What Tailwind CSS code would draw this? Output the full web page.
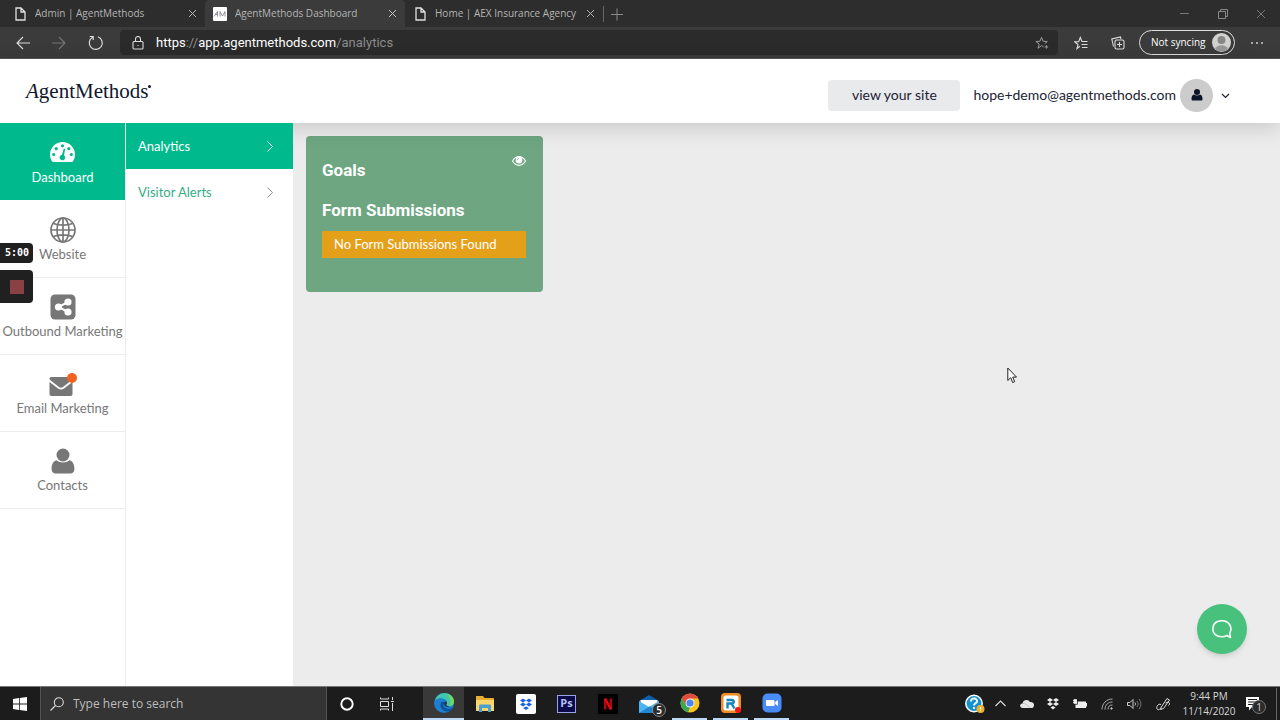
<!DOCTYPE html>
<html lang="en">
<head>
    <meta charset="UTF-8">
    <meta name="viewport" content="width=device-width, initial-scale=1.0">
    <title>AgentMethods Dashboard</title>
    <script src="https://cdn.jsdelivr.net/npm/@tailwindcss/browser@4"></script>
</head>
<body class="h-screen flex flex-col overflow-hidden bg-[#ececec] font-['Lato',sans-serif]">
    <!-- Browser tabs -->
    <div class="h-[27px] shrink-0 flex items-center pl-[5px] bg-[#2d2d2d] text-[#b4b4b4] text-[10px] font-['Open_Sans',sans-serif]">
        <div class="w-[200px] h-full flex items-center gap-2 px-2">
            <svg class="w-[14px] h-[14px] shrink-0" viewBox="0 0 14 14" fill="none" stroke="#e0e0e0" stroke-width="1.3"><path d="M3 1h5l4 4v8H3zM8 1v4h4"/></svg>
            <a href="#" class="grow truncate">Admin | AgentMethods</a>
            <button aria-label="Close tab"><svg class="w-[9px] h-[9px]" viewBox="0 0 9 9" stroke="#b4b4b4" stroke-width="1"><path d="M1 1l7 7M8 1l-7 7"/></svg></button>
        </div>
        <div class="w-[200px] h-full flex items-center gap-2 px-2 bg-[#3b3b3b] rounded-t">
            <svg class="w-[14px] h-[14px] shrink-0" viewBox="0 0 14 14"><rect width="14" height="14" rx="1" fill="#fff"/><path d="M1 9.500l3.500-5v5M2.500 7.500h2M7 9.500v-5l2.500 4.500 2.500-4.500v5" fill="none" stroke="#77777f" stroke-width=".8"/></svg>
            <a href="#" class="grow truncate">AgentMethods Dashboard</a>
            <button aria-label="Close tab"><svg class="w-[9px] h-[9px]" viewBox="0 0 9 9" stroke="#c4c4c4" stroke-width="1"><path d="M1 1l7 7M8 1l-7 7"/></svg></button>
        </div>
        <div class="w-[198px] h-full flex items-center gap-2 px-2">
            <svg class="w-[14px] h-[14px] shrink-0" viewBox="0 0 14 14" fill="none" stroke="#e0e0e0" stroke-width="1.3"><path d="M3 1h5l4 4v8H3zM8 1v4h4"/></svg>
            <a href="#" class="grow truncate">Home | AEX Insurance Agency</a>
            <button aria-label="Close tab"><svg class="w-[9px] h-[9px]" viewBox="0 0 9 9" stroke="#b4b4b4" stroke-width="1"><path d="M1 1l7 7M8 1l-7 7"/></svg></button>
        </div>
        <button class="pl-[7px] border-l border-[#666]" aria-label="New tab"><svg class="w-[12px] h-[16px]" viewBox="0 0 12 16" stroke="#8a8a8a"><path d="M0 8.500h12M6 2.500v12"/></svg></button>
        <div class="ml-auto mr-[14px] flex items-center gap-7">
            <button aria-label="Minimize"><svg class="w-[10px] h-[10px]" viewBox="0 0 10 10" stroke="#777"><path d="M0 4.500h9"/></svg></button>
            <button aria-label="Restore"><svg class="w-[10px] h-[10px]" viewBox="0 0 10 10" fill="none" stroke="#888"><path d="M.5 2.500h7v7h-7zM2.500 2.500v-2h7v7h-2"/></svg></button>
            <button aria-label="Close"><svg class="w-[10px] h-[10px]" viewBox="0 0 10 10" stroke="#777"><path d="M1 1l8 8M9 1l-8 8"/></svg></button>
        </div>
    </div>

    <!-- Address bar -->
    <div class="h-8 shrink-0 flex items-center pl-4 pr-4 bg-[#3b3b3b] border-b border-[#555] font-['Roboto',sans-serif]">
        <button class="mr-[22px]" aria-label="Back"><svg class="w-[14px] h-[14px]" viewBox="0 0 14 14" fill="none" stroke="#ddd" stroke-width="1.1"><path d="M14 7H1M7 1L1 7l6 6"/></svg></button>
        <button class="mr-[22px]" aria-label="Forward"><svg class="w-[14px] h-[14px]" viewBox="0 0 14 14" fill="none" stroke="#777" stroke-width="1.1"><path d="M0 7h13M7 1l6 6-6 6"/></svg></button>
        <button class="mr-4" aria-label="Refresh"><svg class="w-4 h-4" viewBox="0 0 16 16" fill="none" stroke="#ddd" stroke-width="1.2"><path d="M10 1.800a6.500 6.500 0 1 1-5.500.5M1.800 1.500h3.400v3.600"/></svg></button>
        <div class="grow h-[25px] flex items-center bg-[#2b2b2b] rounded-sm pl-3 pr-[9px] text-[13px]">
            <svg class="w-[12px] h-[14px] mr-3 shrink-0" viewBox="0 0 12 14" fill="none" stroke="#ddd" stroke-width="1.1"><rect x="1" y="5.500" width="10" height="7.500" rx="1"/><path d="M3.500 5.500V3a2.500 2.500 0 0 1 5 0v2.500M6 9v1"/></svg>
            <label for="url" class="text-white">https<span class="text-[#8c8c8c]">://</span>app.agentmethods.com</label>
            <input id="url" type="text" value="/analytics" class="grow min-w-0 text-[#8c8c8c] outline-none">
            <button aria-label="Add to favorites"><svg class="w-[14px] h-[14px]" viewBox="0 0 16 16" fill="none" stroke="#aaa"><path d="M10 12.500L7.500 11l-4 3 1.300-4.700L1 6.300l4.700-.3L7.500 1.500 9.300 6l4.700.3-3 2.500M11 12.500h4M13 10.500v4"/></svg></button>
        </div>
        <button class="ml-4" aria-label="Favorites"><svg class="w-[14px] h-[14px]" viewBox="0 0 14 14" fill="none" stroke="#ddd" stroke-width="1.1"><path d="M6 10.200L3 12.500l1-4-3.300-2.700 4-.2L6.300 1.500 8 5.500h5.500M7.500 8.500h6M8 11.500h5.500"/></svg></button>
        <button class="ml-[23px]" aria-label="Collections"><svg class="w-[14px] h-[14px]" viewBox="0 0 14 14" fill="none" stroke="#ddd" stroke-width="1.1"><path d="M5.500 4h6A1.500 1.500 0 0 1 13 5.500v6a1.500 1.500 0 0 1-1.500 1.500h-6A1.500 1.500 0 0 1 4 11.500v-6A1.500 1.500 0 0 1 5.500 4M8.500 6v5M6 8.500h5M2.500 10.500L.8 3 9.500 1l.5 2"/></svg></button>
        <button class="ml-[14px] w-[96px] h-[25px] flex items-center justify-between pl-[11px] pr-[3px] rounded-full border border-[#ddd] text-white text-[10px] font-['Open_Sans',sans-serif]">Not syncing
            <svg class="w-[19px] h-[19px]" viewBox="0 0 19 19"><circle cx="9.500" cy="9.500" r="9.500" fill="#d2d2d0"/><circle cx="9.500" cy="7" r="4" fill="#888"/><path d="M3 16a7 6 0 0 1 13 0 9.500 9.500 0 0 1-13 0" fill="#999"/></svg>
        </button>
        <button class="ml-[15px]" aria-label="Settings and more"><svg class="w-[14px] h-[14px]" viewBox="0 0 14 14" fill="#ddd"><circle cx="2" cy="7" r=".9"/><circle cx="7" cy="7" r=".9"/><circle cx="12" cy="7" r=".9"/></svg></button>
    </div>

    <!-- Header -->
    <header class="relative z-10 h-16 shrink-0 flex items-center bg-white pl-[26px] pr-[50px] pt-2 shadow-[0_4px_22px_rgba(0,0,0,0.16)] text-[#1c2336] text-sm">
        <a href="#" class="grow pb-2 flex items-start font-['Liberation_Serif',serif] text-[21px] leading-6 text-[#10182c]"><i>A</i>gentMethods<span class="mt-1.5 w-[3px] h-[3px] rounded-full bg-[#10182c]"></span></a>
        <button class="w-[132px] h-[31px] mr-[13px] rounded-sm bg-[#e9eaec]">view your site</button>
        <a href="#">hope+demo@agentmethods.com</a>
        <button class="ml-1 flex items-center gap-2" aria-label="Account">
            <span class="w-[33px] h-[33px] rounded-full bg-[#cccccc] flex items-center justify-center">
                <svg class="w-[12px] h-[12px]" viewBox="0 0 12 12" fill="#0b1428"><circle cx="6" cy="3" r="3"/><path d="M3 5.500c1.800 1.400 4.200 1.400 6 0 1.700.5 2.500 2 2.500 4.500 0 1-.5 1.500-1.500 1.500H2C1 11.500.5 11 .5 10c0-2.500.8-4 2.500-4.500"/></svg>
            </span>
            <svg class="w-[9px] h-[9px]" viewBox="0 0 9 9" fill="none" stroke="#1c2336" stroke-width="1.200"><path d="M1 3l3.500 3.500L8 3"/></svg>
        </button>
    </header>

    <!-- Main content -->
    <div class="grow min-h-0 flex">
        <nav class="relative z-20 w-[126px] shrink-0 bg-white border-r border-[#ececec] text-[13px] leading-5 text-[#777]">
            <a href="#" class="h-[77px] flex flex-col items-center pt-[17px] gap-1 bg-[#00b98d] text-white">
                <svg class="w-[25px] h-[23px]" viewBox="0 0 25 23"><path d="M12.500 2A12.500 12.500 0 0 0 0 14.500c0 2.500.7 4.700 1.900 6.700.3.500.7.800 1.300.8h18.600c.6 0 1-.3 1.300-.8a12.500 12.500 0 0 0 1.900-6.700A12.500 12.500 0 0 0 12.500 2" fill="#fff"/><g fill="#00b98d"><circle cx="3.700" cy="14.500" r="1.600"/><circle cx="6.200" cy="8.700" r="1.600"/><circle cx="12.500" cy="5.800" r="1.600"/><circle cx="18.800" cy="8.700" r="1.600"/><circle cx="21.300" cy="14.500" r="1.600"/><path d="M13.800 8.500l1.400.4-1.200 6.300a2.800 2.800 0 1 1-2-.5z"/></g></svg>
                Dashboard
            </a>
            <a href="#" class="h-[77px] flex flex-col items-center pt-[17px] gap-px">
                <svg class="w-[26px] h-[26px]" viewBox="0 0 26 26" fill="none" stroke="#777" stroke-width="1.700"><circle cx="13" cy="13" r="12"/><ellipse cx="13" cy="13" rx="6" ry="12"/><path d="M13 1v24M1 13h24M3.500 6.500c5 2.200 14 2.200 19 0M3.500 19.500c5-2.200 14-2.200 19 0"/></svg>
                Website
            </a>
            <a href="#" class="h-[77px] flex flex-col items-center pt-4 gap-px border-t border-[#ececec] whitespace-nowrap">
                <svg class="w-[26px] h-[26px]" viewBox="0 0 26 26"><rect x=".5" y=".5" width="25" height="25" rx="4.500" fill="#777"/><g fill="#fff"><circle cx="8.500" cy="13" r="3.600"/><circle cx="18" cy="8" r="3.600"/><circle cx="18" cy="18" r="3.600"/></g><path d="M18 8L8.500 13l9.500 5" fill="none" stroke="#fff" stroke-width="2"/></svg>
                Outbound Marketing
            </a>
            <a href="#" class="h-[77px] flex flex-col items-center pt-4 gap-px border-t border-[#ececec]">
                <svg class="w-[29px] h-[26px]" viewBox="0 0 29 26"><path d="M1.500 7.500C1.500 6.500 2.500 6 3.500 6h19c1 0 2 .5 2 1.500 0 1-.7 1.700-1.500 2.300L15 16c-1.300 1-2.700 1-4 0L3 9.800c-.8-.6-1.500-1.300-1.500-2.300M1.500 11l8.500 6.500c2 1.400 4 1.400 6 0l8.500-6.500v12c0 1.200-.8 2-2 2h-19c-1.200 0-2-.8-2-2z" fill="#777"/><circle cx="24" cy="7" r="5" fill="#f26322"/></svg>
                Email Marketing
            </a>
            <a href="#" class="h-[78px] flex flex-col items-center pt-4 gap-px border-y border-[#ececec]">
                <svg class="w-[24px] h-[26px]" viewBox="0 0 24 26" fill="#777"><circle cx="12" cy="7" r="6.500"/><path d="M5.500 12.200c3.800 3 9.200 3 13 0 3.200.8 4.900 4 4.900 8.800 0 2.800-1.600 4.500-4 4.500H4.600c-2.400 0-4-1.700-4-4.500 0-4.800 1.700-8 4.900-8.800"/></svg>
                Contacts
            </a>
            <!-- Recorder widget -->
            <div class="absolute left-0 top-[120px] w-[33px] text-white">
                <div class="h-5 pl-[5px] flex items-center rounded-r bg-[#202020] text-[10px] font-bold font-['DejaVu_Sans_Mono',monospace]">5:00</div>
                <button class="mt-[7px] w-full h-[33px] flex items-center justify-center rounded-r bg-[#202020]" aria-label="Stop recording"><span class="w-[14px] h-[14px] bg-[#8a4145]"></span></button>
            </div>
        </nav>
        <nav class="relative z-20 w-[167px] shrink-0 bg-white text-[13px] leading-5">
            <a href="#" class="h-[46px] flex items-center justify-between pl-3 pr-5 bg-[#00b98d] text-white">Analytics
                <svg class="w-[6px] h-[11px]" viewBox="0 0 6 11" fill="none" stroke="#fff"><path d="M.5 .5l5 5-5 5"/></svg>
            </a>
            <a href="#" class="h-[46px] flex items-center justify-between pl-3 pr-5 text-[#35ad86]">Visitor Alerts
                <svg class="w-[6px] h-[11px]" viewBox="0 0 6 11" fill="none" stroke="#888"><path d="M.5 .5l5 5-5 5"/></svg>
            </a>
        </nav>
        <main class="relative grow p-[13px]">
            <section class="w-[237px] h-[156px] rounded-sm bg-[#6da681] pl-4 pr-[17px] pt-6 text-white">
                <div class="flex justify-between items-start">
                    <h2 class="font-['Roboto',sans-serif] font-bold text-[17px] leading-5">Goals</h2>
                    <button class="-mt-1" aria-label="Toggle goals"><svg class="w-[14px] h-[10px]" viewBox="0 0 14 10" fill="none" stroke="#fff"><path d="M.5 5c3.500-5.800 9.500-5.800 13 0-3.500 5.800-9.500 5.800-13 0" stroke-width="1.100"/><circle cx="7" cy="4.300" r="3.300" fill="#fff" stroke="none"/><path d="M5.300 4.200c0-1.100.6-1.700 1.700-1.700" stroke="#6da681" stroke-width=".8"/></svg></button>
                </div>
                <h3 class="mt-5 font-['Roboto',sans-serif] font-bold text-[17px] leading-5">Form Submissions</h3>
                <p class="mt-[11px] h-[27px] flex items-center pl-3 bg-[#e5a01a] text-[13px]">No Form Submissions Found</p>
            </section>
            <svg class="absolute left-[714px] top-[244px] w-[11px] h-[17px]" viewBox="0 0 11 17" fill="#fff" stroke="#222"><path d="M.8 1v12.500l2.900-2.800 2 4.800 2-.9-2-4.500h3.800z"/></svg>
            <button class="absolute right-[33px] bottom-8 w-[50px] h-[50px] rounded-full bg-[#48c17c] shadow-md flex items-center justify-center" aria-label="Open chat">
                <svg class="w-[20px] h-[20px]" viewBox="0 0 20 20" fill="none" stroke="#fff" stroke-width="1.600"><path d="M18.500 18.500l-.8-4C21 8 17 1.800 10 1.800S.8 6 .8 10s3 7.800 9 7.800c2 0 3.500-.3 5-1.300z" stroke-linejoin="round"/></svg>
            </button>
        </main>
    </div>

    <!-- Taskbar -->
    <footer class="relative z-30 h-[34px] shrink-0 flex items-stretch bg-[#1c1c1c] border-t border-[#777] text-[#d6d6d6] font-['Open_Sans',sans-serif]">
        <button class="w-10 flex items-center justify-center" aria-label="Start"><svg class="w-[14px] h-[14px]" viewBox="0 0 14 14" fill="#fff"><path d="M0 2l6-.9v5.500H0zM6.800 1L14 0v6.600H6.800zM0 7.400h6v5.500L0 12zM6.800 7.400H14V14l-7.200-1z"/></svg></button>
        <div class="w-[287px] flex items-center gap-[9px] pl-[9px] bg-[#343434] border-x border-[#555]">
            <svg class="w-[14px] h-[14px]" viewBox="0 0 14 14" fill="none" stroke="#ddd" stroke-width="1.100"><circle cx="8.800" cy="5.200" r="4.500"/><path d="M5.500 8.500L.5 13.500"/></svg>
            <input type="search" aria-label="Search" placeholder="Type here to search" class="grow min-w-0 text-[12px] placeholder-[#bdbdbd] outline-none">
        </div>
        <button class="w-10 flex items-center justify-center" aria-label="Cortana"><svg class="w-[14px] h-[14px]" viewBox="0 0 14 14" fill="none" stroke="#fff" stroke-width="1.900"><circle cx="7" cy="7" r="5.700"/></svg></button>
        <button class="w-10 mr-4 flex items-center justify-center" aria-label="Task view"><svg class="w-[14px] h-[14px]" viewBox="0 0 14 14" fill="none" stroke="#ddd"><path d="M.5 4.500h8v5h-8zM.5 .5v1.500h8V.5M.5 13.500V12h8v1.500M12.500 0v3M12.500 6v8M11 4.500h3"/></svg></button>
        <div class="flex text-white">
            <button class="w-[41px] flex items-center justify-center bg-[#393939] border-b-2 border-[#bcd9f5]" aria-label="Edge"><svg class="w-[20px] h-[20px]" viewBox="0 0 20 20"><circle cx="10" cy="10" r="10" fill="#1d7fd0"/><path d="M1 8C2 3 6 0 10.500 0 16 0 20 4 20 8.500c0 3-2.300 4.700-4.500 4.700-2.700 0-3.500-1-3.200-1.700.4-.8.700-1.300.6-2.500C12.600 6.500 9 4.700 5.500 5.300 3.300 5.700 1.800 6.700 1 8" fill="#42c6ab"/><path d="M13 1c5 1 7 5 7 7.500 0 3-2.300 4.700-4.500 4.700 2-4 1-9-2.500-12.200" fill="#72d85a"/><path d="M7.500 9C5 12 7 18 13 18.500c3 0 5-1.500 6-3.500-2 1-7 1.500-9-1-1.300-1.600-1-3 .5-4.500-.8-.8-2-1-3-.5" fill="#0c529c"/><path d="M12.300 11.500c.4-.8.700-1.300.6-2.500-.8-1.200-2.500-.5-3 1-.5 1.800 1 3.200 3 3.700l5.600.3c-1 .5-3 0-4-.8-1.700-.2-2.500-1-2.200-1.700" fill="#263445"/></svg></button>
            <button class="w-[41px] flex items-center justify-center" aria-label="File Explorer"><svg class="w-[20px] h-[18px]" viewBox="0 0 20 18"><path d="M1 1h7l1.500 2H18c.6 0 1 .4 1 1v12H1z" fill="#e9ae32"/><path d="M1 5h18v11H1z" fill="#fbd66d"/><path d="M4 17v-6c0-1 .5-1.500 1.500-1.500h9c1 0 1.500.5 1.500 1.500v6h-3v-4H7v4z" fill="#4a9fd3"/></svg></button>
            <button class="w-[41px] flex items-center justify-center" aria-label="Dropbox"><svg class="w-[20px] h-[20px]" viewBox="0 0 20 20"><rect width="20" height="20" rx="2" fill="#fff"/><path d="M7 4.500l3 2-3 2-3-2zM13 4.500l3 2-3 2-3-2zM7 8.500l3 2-3 2-3-2zM13 8.500l3 2-3 2-3-2zM10 12.500l3 1.500-3 2-3-2z" fill="#1763e6"/></svg></button>
            <button class="w-[41px] flex items-center justify-center"><span class="w-[19px] h-[18px] flex items-center justify-center border border-[#9aa2e8] bg-[#0b0b4a] text-[11px] font-bold text-[#b9bff5]">Ps</span></button>
            <button class="w-[41px] flex items-center justify-center" aria-label="Netflix"><svg class="w-[20px] h-[20px]" viewBox="0 0 20 20"><path d="M0 0h20v20H0z" fill="#000"/><path d="M7.200 15.500v-11M12.800 15.500v-11" stroke="#b30710" stroke-width="2.400"/><path d="M6 4.500h2.600l5.400 11h-2.600z" fill="#e50914"/></svg></button>
            <button class="relative w-[41px] flex items-center justify-center" aria-label="Mail">
                <svg class="w-[20px] h-[20px]" viewBox="0 0 20 20"><path d="M0 7l10-6 10 6v12H0z" fill="#0e5fa8"/><path d="M1.500 6h17v7h-17z" fill="#fff"/><path d="M0 7l10 6 10-6v12H0z" fill="#4cb4ef"/><path d="M0 19L11 12.300 20 19z" fill="#2287d2"/></svg>
                <span class="absolute left-6 top-4 w-[14px] h-[14px] rounded-full border border-[#888] bg-[#2b2b2b] text-[10px] leading-3 text-center font-semibold">5</span>
            </button>
            <button class="w-[35px] mx-[3px] flex items-center justify-center border-b-2 border-[#bcd9f5]" aria-label="Chrome"><svg class="w-[20px] h-[20px]" viewBox="0 0 20 20"><circle cx="10" cy="10" r="9.500" fill="#fbc51c"/><path d="M1.800 5.200A9.500 9.500 0 0 1 18.200 5.500H10L5.900 12.200z" fill="#e04a3f"/><path d="M1.800 5.200L5.900 12.300 10 14.500l-2 4.800A9.500 9.500 0 0 1 1.800 5.200" fill="#3aa757"/><circle cx="10" cy="10" r="4.500" fill="#f3f3f3"/><circle cx="10" cy="10" r="3.600" fill="#4a87ee"/></svg></button>
            <button class="w-[35px] mx-[3px] flex items-center justify-center border-b-2 border-[#bcd9f5]" aria-label="RingCentral"><svg class="w-[20px] h-[20px]" viewBox="0 0 20 20"><rect width="20" height="20" rx="4" fill="#f28c22"/><rect x="2.500" y="2.500" width="15" height="15" rx="2" fill="#fff"/><path d="M6.500 15.500v-5h4.200c1.400 0 2-.6 2-1.700s-.6-1.800-2-1.800H5.500M10.500 10.500l3 5" fill="none" stroke="#1785b5" stroke-width="2.400"/><circle cx="17" cy="17" r="3" fill="#f31414"/></svg></button>
            <button class="w-[35px] mx-[3px] flex items-center justify-center border-b-2 border-[#bcd9f5]" aria-label="Zoom"><svg class="w-[20px] h-[20px]" viewBox="0 0 20 20"><rect x=".5" y=".5" width="19" height="19" rx="5" fill="#4a8cf7"/><path d="M4 7h7c1 0 1.500.5 1.500 1.500V13h-7C4.500 13 4 12.500 4 11.500zM13.200 9L16 7v6l-2.800-2z" fill="#fff"/></svg></button>
        </div>

        <!-- System tray -->
        <div class="ml-auto flex items-center">
            <button class="mr-[10px]" aria-label="Help"><svg class="w-[20px] h-[20px]" viewBox="0 0 20 20"><circle cx="9" cy="9.500" r="8.200" fill="#1592cf" stroke="#fff" stroke-width="1.500"/><path d="M6 7.500c0-4.500 6.500-3.500 6 0-.3 1.800-3 2-3 4M9 13v2" fill="none" stroke="#fff" stroke-width="1.900"/><circle cx="15.500" cy="15" r="4" fill="#eeb12d"/><path d="M15.500 13v2.500M15.500 16.300v1" stroke="#fff"/></svg></button>
            <button class="mr-[14px]" aria-label="Show hidden icons"><svg class="w-[11px] h-[7px]" viewBox="0 0 11 7" fill="none" stroke="#ddd" stroke-width="1.100"><path d="M.5 6l5-5 5 5"/></svg></button>
            <button class="mr-[13px]" aria-label="OneDrive"><svg class="w-[14px] h-[9px]" viewBox="0 0 14 9"><path d="M3 9C-1 9-.5 4.500 2.500 4.500 3 0 9 0 9.800 3c3.200-.4 5 1.500 3.900 4.500-.4 1-1.200 1.500-2.500 1.500z" fill="#e8e8e8"/><path d="M2.500 4.500l2-.3 6 4.800" fill="none" stroke="#aaa" stroke-width=".6"/></svg></button>
            <button class="mr-[14px]" aria-label="Dropbox status"><svg class="w-[12px] h-[12px]" viewBox="0 0 12 12" fill="#eee"><path d="M3 0l3 2-3 2-3-2zM9 0l3 2-3 2-3-2zM3 4l3 2-3 2-3-2zM9 4l3 2-3 2-3-2zM6 8l2.500 1.500L6 11.500 3.500 9.500z"/></svg></button>
            <button class="mr-[14px]" aria-label="Battery"><svg class="w-[14px] h-[10px]" viewBox="0 0 14 10"><path d="M2.500 2.500H13V4h1v3.500h-1V9H2.500z" fill="#eee"/><path d="M0 1.500h1M0 3.500h1M1 .5h2.500v4H1z" fill="#eee" stroke="#eee" stroke-width=".8"/><path d="M4.500 2v3.300H1.500" fill="none" stroke="#1c1c1c" stroke-width=".7"/></svg></button>
            <button class="mr-[14px]" aria-label="Network"><svg class="w-[12px] h-[12px]" viewBox="0 0 12 12" fill="none" stroke="#aaa"><path d="M1 11.500C1 5.500 5.500 1 11.500 1M4 11.500C4 7 7 4 11.500 4M7 11.500c0-3 1.500-4.500 4.500-4.500"/><circle cx="10.500" cy="10.500" r=".8" fill="#eee"/></svg></button>
            <button class="mr-[14px]" aria-label="Volume"><svg class="w-[15px] h-[12px]" viewBox="0 0 15 12" fill="none" stroke="#ccc"><path d="M.5 4.500v3H3l3 3v-9l-3 3z"/><path d="M8 4.500c.7 1 .7 2 0 3"/><path d="M10 3c1.500 2 1.500 4 0 6M12 1c2.500 3 2.500 7 0 10" stroke="#777"/></svg></button>
            <button class="mr-[12px]" aria-label="Pen"><svg class="w-[15px] h-[14px]" viewBox="0 0 15 14" fill="none" stroke="#ddd"><path d="M5 10.500l6-9 2.500 1.500-6 8.500-3 1zM5 7.500c-3-1.500-5.500 3-3.500 5 2 1 2.500-1.500 4-1.500M9.500 6c3-2 5.500 0 3 2.500"/></svg></button>
            <div class="w-[52px] mr-[11px] text-[10px] leading-[15px] whitespace-nowrap flex flex-col items-center"><span>9:44 PM</span><span>11/14/2020</span></div>
            <button class="relative w-[20px] h-[20px] mr-[10px]" aria-label="Notifications">
                <svg class="w-[13px] h-[14px]" viewBox="0 0 13 14"><path d="M0 0h13v10H6l-3 3.500V10H0z" fill="#fff"/><path d="M2 2.500h9M2 5h9M2 7.500h6" stroke="#1c1c1c"/></svg>
                <span class="absolute right-0 bottom-0 w-[14px] h-[14px] rounded-full border border-[#777] bg-[#2b2b2b] text-[10px] leading-3 text-center">1</span>
            </button>
            <span class="w-1 h-8 border-l border-[#666]"></span>
        </div>
    </footer>
</body>
</html>
